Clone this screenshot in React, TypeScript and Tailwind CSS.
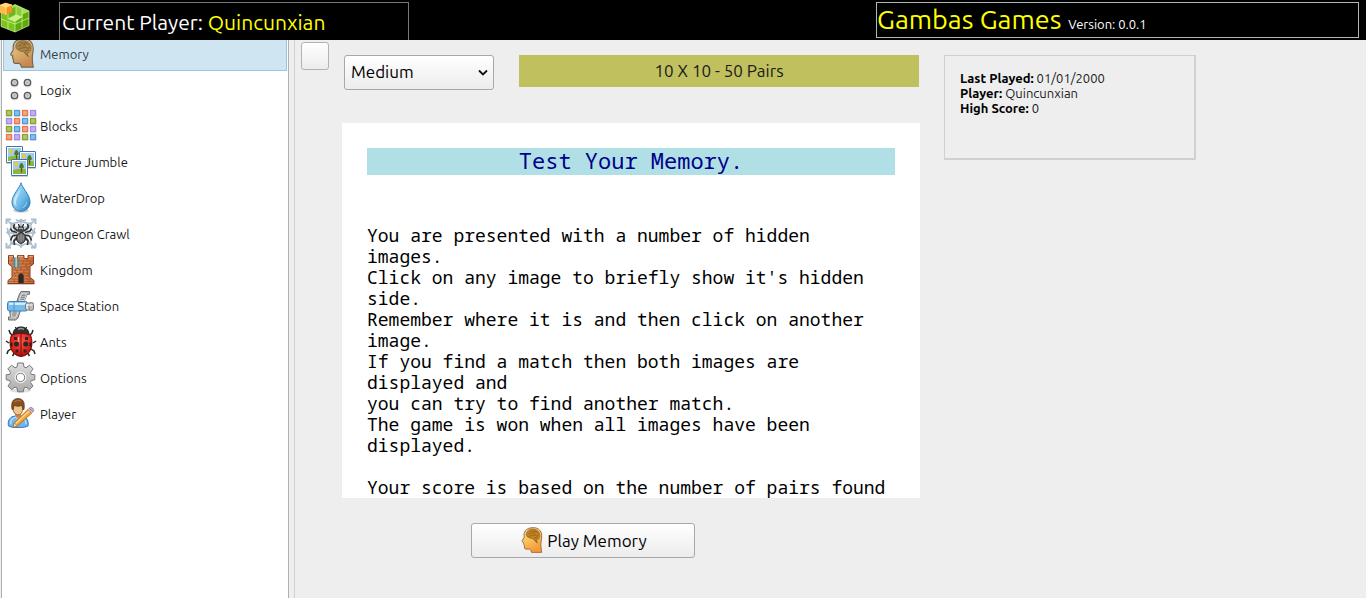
import { Fragment, useState } from "react";

const HeadIcon = ({ className, bright }: { className?: string; bright?: boolean }) => {
  const id = bright ? "head-bright" : "head-dim";
  return (
    <svg viewBox="-2 -1 34 34" className={className} aria-hidden="true">
      <defs>
        <linearGradient id={id} x1="0" y1="0" x2="0.4" y2="1">
          <stop offset="0" stopColor={bright ? "#f6d99b" : "#d9cba4"} />
          <stop offset="0.55" stopColor={bright ? "#f9c45c" : "#d8b070"} />
          <stop offset="1" stopColor={bright ? "#f79a35" : "#c68a52"} />
        </linearGradient>
      </defs>
      <path
        d="M8 5C10 2 14 1 18 1c6 0 10 4 10 10 0 4-1 7-1 10 0 3 .2 6 1 10H15.500c-.3-2-.8-3.500-2.500-4H9c-1.500 0-2.300-1-2-2.500l.2-1.200-.9-.8.3-1-.7-1.200.3-1.300-1.700-.8c-.7-.4-.6-1 0-1.800l2.200-3.400C6.500 9 6.500 7 8 5z"
        fill={`url(#${id})`}
        stroke={bright ? "#9b6b46" : "#77654f"}
        strokeWidth="1.200"
      />
      <path
        d="M9.500 10C9 6 12 3 16 2.800c5-.3 9.500 2.500 9.700 7.200 0 4-1.700 6-4.200 6l1 3.500-5-5.500c-2 .6-4 .3-5-1.300-1.700 0-2.800-1-3-2.700z"
        fill={bright ? "#c48325" : "#a98348"}
        stroke="#8b6428"
        strokeWidth="0.800"
      />
      <path
        d="M12 9c1-2 3-1.500 4 0M14 5.500c2-1 3 1 5 0s3 1 4 2M17 10c1 1 3-1 4 .5s3 0 3-1M12 12c2-.5 3-2 5-1M19 13c1 .8 3 .5 4-.5M17 7.500h3"
        fill="none"
        stroke={bright ? "#8d5a15" : "#77592b"}
        strokeWidth="0.900"
      />
      <path d="M17.500 14.500l5.500 5.500" stroke="#7a5b36" strokeWidth="1" />
    </svg>
  );
};

const LogixIcon = ({ className }: { className?: string }) => (
  <svg viewBox="0 0 32 32" className={className} aria-hidden="true">
    {[[9.5, 9.5], [22.5, 9.5], [9.5, 22.5], [22.5, 22.5]].map(([cx, cy]) => (
      <g key={`${cx}-${cy}`}>
        <ellipse cx={cx} cy={cy + 1.5} rx="4" ry="3.500" fill="#00000022" />
        <circle cx={cx} cy={cy} r="3.200" fill="#b9b9b9" stroke="#5b5b5b" strokeWidth="1.300" />
        <circle cx={cx} cy={cy} r="1.800" fill="none" stroke="#dedede" strokeWidth="0.700" />
      </g>
    ))}
  </svg>
);

const blockRows = [
  ["#8aa51f", "#4a9de0", "#f0764a", "#a58af0"],
  ["#a58af0", "#f0764a", "#4a9de0", "#8aa51f"],
  ["#8aa51f", "#4a9de0", "#f0764a", "#a58af0"],
  ["#f0764a", "#a58af0", "#8aa51f", "#4a9de0"],
];

const BlocksIcon = ({ className }: { className?: string }) => (
  <svg viewBox="0 0 32 32" className={className} aria-hidden="true">
    {blockRows.map((row, y) =>
      row.map((color, x) => (
        <g key={`${x}-${y}`}>
          <rect x={x * 8 + 1} y={y * 8 + 2} width="6.500" height="6" rx="0.800" fill="#00000020" />
          <rect x={x * 8 + 1.5} y={y * 8 + 1.5} width="5" height="5" fill={color} fillOpacity="0.500" stroke={color} strokeWidth="1.300" />
        </g>
      )),
    )}
  </svg>
);

const PicturesIcon = ({ className }: { className?: string }) => (
  <svg viewBox="0 0 32 32" className={className} aria-hidden="true">
    {[[1, 1], [14, 6], [6, 14]].map(([x, y]) => (
      <g key={x} transform={`translate(${x} ${y})`}>
        <rect x="0" y="1" width="17" height="17" rx="1" fill="#00000030" />
        <rect x="0.500" y="0.500" width="16" height="16" rx="0.500" fill="#fff" stroke="#3d75ac" />
        <rect x="2" y="2" width="13" height="13" fill="#9ccdf0" />
        <path d="M2 11q7-2 13-.5V15H2z" fill="#8fb53a" />
        <circle cx="5" cy="5.200" r="2" fill="#fbc52f" />
        <path d="M10.500 13.500V8" stroke="#6b4a1c" strokeWidth="1.200" />
        <path d="M10.500 4c1.200 0 1.800 2 2.300 3.600.2 1.300-.9 1.900-2.300 1.900s-2.500-.6-2.300-1.900C8.700 6 9.300 4 10.500 4z" fill="#4e7a22" />
      </g>
    ))}
  </svg>
);

const DropIcon = ({ className }: { className?: string }) => (
  <svg viewBox="0 0 32 32" className={className} aria-hidden="true">
    <defs>
      <linearGradient id="drop" x1="0" y1="0" x2="1" y2="1">
        <stop offset="0.200" stopColor="#a8daf5" />
        <stop offset="0.600" stopColor="#6bb8e8" />
        <stop offset="1" stopColor="#2379bd" />
      </linearGradient>
    </defs>
    <ellipse cx="16" cy="29.500" rx="8" ry="2.200" fill="#00000030" />
    <path d="M16 1.800c1 5 9 12 9 19.200 0 5.500-4 9.300-9 9.300s-9-3.800-9-9.300C7 13.800 15 6.800 16 1.800z" fill="url(#drop)" stroke="#2c80bd" />
    <path d="M15 7c-1 5-6 8-6.200 13.500.2 3 1.700 4.500 2.700 4.500C9.500 18 15 14 15 7z" fill="#e3f5ff" fillOpacity="0.700" />
    <path d="M22 20c0 4-2 6.500-5 7 3-2 4-4 5-7z" fill="#b9e8ff" />
  </svg>
);

const SpiderIcon = ({ className }: { className?: string }) => (
  <svg viewBox="0 0 32 32" className={className} aria-hidden="true">
    <g fill="none" stroke="#a9bccc" strokeWidth="1.500">
      <path d="M2 3l28 28M30 3L2 31M16 2v29M2 16h28" />
      <path d="M6 6q5 1 10-2 5 3 10 2-1 5 3 10-4 5-3 11-5-1-10 2-5-3-10-2 1-6-3-11 4-5 3-10z" />
      <path d="M10 10q3 1 6-1 3 2 6 1-1 3 2 6-3 3-2 7-3-1-6 1-3-2-6-1 1-4-2-7 3-3 2-6z" />
      <path d="M1.500 7V2.500H6M26 2.500h4.500V7M30.500 26v4.500H26M6 30.500H1.500V26" strokeWidth="1.900" />
      <path d="M1.500 11q3 2 0 5M30.500 11q-3 2 0 5M11 2.500q2 2.500 5 0 3 2.500 5 0" />
    </g>
    <g fill="none" stroke="#343434" strokeWidth="1.700" strokeLinejoin="round">
      <path d="M13 14L8.500 10.500 9.500 7M19 14l4.500-3.500-1-3.500M12 15.500L7 14l-1.500-2.500M20 15.500l5-1.500 1.500-2.500M12 18l-4.500 1-2 4.500M20 18l4.500 1 2 4.500M12.500 20.500L9 23.500l.5 4.500M19.500 20.500l3.500 3-.5 4.500" />
    </g>
    <ellipse cx="16" cy="12.500" rx="3.300" ry="3.300" fill="#454545" />
    <path d="M14.500 10l-1-3M17.500 10l1-3" stroke="#222" strokeWidth="1.300" />
    <ellipse cx="16" cy="21" rx="4.500" ry="5.400" fill="#666" stroke="#222" />
    <path d="M16 17v8.500M13.800 18.500v5M18.200 18.500v5" stroke="#a5a5a5" strokeWidth="0.900" />
    <path d="M14 12q2-2 4 0" fill="none" stroke="#ccc" />
  </svg>
);

const CastleIcon = ({ className }: { className?: string }) => (
  <svg viewBox="0 0 32 32" className={className} aria-hidden="true">
    <defs>
      <linearGradient id="castle" x1="0" y1="0" x2="1" y2="0">
        <stop offset="0" stopColor="#e09058" />
        <stop offset="1" stopColor="#c96a36" />
      </linearGradient>
    </defs>
    <rect x="2" y="29.500" width="28" height="2.500" rx="1" fill="#00000030" />
    <path d="M3.500 2.500h5v3h4v-3h6.500v3h4v-3h5.500V11L25 13.500v11l4 3V30.500H3v-3l4-3v-11L3.500 11z" fill="url(#castle)" stroke="#863d1d" />
    <path
      d="M4 8h24M4 11h24M7.500 14h17M7.500 17h17M7.500 20h17M7.500 23h17M6 26h20M4 28.500h24M7 5v3M14 5v3M22 6v2M10 8v3M18 8v3M25 8v3M12 11v3M21 11v3M10 14v3M16 14v3M22 14v3M12 17v3M19 17v3M10 20v3M23 20v3M9 26v3M24 26v3"
      stroke="#8f4422"
      strokeWidth="0.600"
    />
    <path d="M4 3.300h4M13 3.300h5M24 3.300h4" stroke="#efb086" />
    <path d="M13.500 30v-7a2.500 2.500 0 0 1 5 0v7z" fill="#292929" stroke="#6b3116" strokeWidth="0.800" />
    <path d="M8.500 4.500h5.500V16l-2.700-2.300L8.500 16z" fill="#3c8bd0" />
    <path d="M10.400 4.500h1.700V14h-1.700z" fill="#f2c635" />
  </svg>
);

const StationIcon = ({ className }: { className?: string }) => (
  <svg viewBox="0 0 32 32" className={className} aria-hidden="true">
    <path d="M16 2.500h8.500v2.800h-2.500L19.500 12H12l2.500-7zM4.500 21h11l-2.500 8-2.500 2H3.500v-3h2z" fill="#b6b6b6" stroke="#6e6e6e" />
    <path d="M16.500 5h5L19.300 11.500h-5zM7.500 22h5.500L11 28H6z" fill="#8b8b8b" stroke="#eee" strokeWidth="0.800" />
    <path d="M16.500 7.500h4M15.500 9.500h4M8 24h4M7 26h4" stroke="#d0d0d0" strokeWidth="0.700" />
    <rect x="2.500" y="12.500" width="20" height="9.500" rx="2" fill="#79bbec" stroke="#3d83bc" />
    <path d="M4 14.800h17" stroke="#d5eeff" strokeWidth="2.200" />
    <path d="M9 13v9" stroke="#4f96ce" />
    <rect x="20.500" y="14" width="5.500" height="7" rx="2" fill="#e0e0e0" stroke="#787878" />
    <rect x="24" y="13.500" width="4.500" height="8" rx="2" fill="#bababa" stroke="#787878" />
    <path d="M21.500 16h6" stroke="#fff" />
  </svg>
);

const LadybugIcon = ({ className }: { className?: string }) => (
  <svg viewBox="0 0 32 32" className={className} aria-hidden="true">
    <defs>
      <radialGradient id="bug" cx="0.500" cy="0.350" r="0.650">
        <stop offset="0" stopColor="#ff5a4d" />
        <stop offset="0.700" stopColor="#df2019" />
        <stop offset="1" stopColor="#990c08" />
      </radialGradient>
    </defs>
    <path d="M7 10L5 8 4 5M25 10l2-2 1-3M4 18l-3-2M28 18l3-2M6 24l-3 2-1 3M26 24l3 2 1 3M10 27l-2.500 4M22 27l2.500 4" fill="none" stroke="#252525" strokeWidth="1.500" />
    <path d="M12 4l-2-2M20 4l2-2" stroke="#252525" />
    <path d="M8 10c0-5 3-8 8-8s8 3 8 8l-8 3z" fill="#303030" stroke="#151515" />
    <path d="M13 4.500q3-2 6 0" stroke="#999" fill="none" strokeWidth="1.300" />
    <path d="M6.500 10q9.500-3.500 19 0c3.500 9 1 20.500-9.500 21.500C5.500 30.500 3 19 6.500 10z" fill="url(#bug)" stroke="#6b0f0b" />
    <path d="M16 9v22" stroke="#930f0a" strokeWidth="1.200" />
    <circle cx="11.500" cy="19" r="2.600" fill="#292929" />
    <circle cx="20.800" cy="19" r="2.600" fill="#292929" />
    <path d="M9 12h3v3H9zM20 12h3v3h-3zM10.500 24.500h3v3h-3zM18.500 24.500h3v3h-3z" fill="#292929" />
    <path d="M5.500 17.500h2v4h-2zM24.500 17.500h2v4h-2z" fill="#3c1513" />
    <path d="M13.500 12v5" stroke="#ffa59e" strokeWidth="1" />
  </svg>
);

const GearIcon = ({ className }: { className?: string }) => (
  <svg viewBox="0 0 32 32" className={className} aria-hidden="true">
    <defs>
      <linearGradient id="gear" x1="0" y1="0" x2="0" y2="1">
        <stop offset="0" stopColor="#dedede" />
        <stop offset="1" stopColor="#aaa" />
      </linearGradient>
    </defs>
    <ellipse cx="15.500" cy="29.500" rx="11" ry="2" fill="#00000020" />
    <path
      fillRule="evenodd"
      d="M12.700 2h5.600l.7 4 2 .8L24.500 4.200l3.600 3.600-2.600 3.500.8 2 3.500.5v5l-3.500.7-.8 2 2.600 3.500-3.600 3.600-3.500-2.400-2 .8-.7 3.800h-5.600l-.7-3.800-2-.8-3.500 2.400-3.600-3.600L5.500 21.500l-.8-2-3.500-.7v-5l3.500-.5.8-2-2.600-3.500 3.600-3.600L10 6.800l2-.8zM15.500 12.200a4.200 4.200 0 1 0 0 8.400 4.200 4.200 0 0 0 0-8.400z"
      fill="url(#gear)"
      stroke="#777"
    />
    <circle cx="15.500" cy="16.400" r="5.300" fill="none" stroke="#f0f0f0" strokeWidth="1.100" />
  </svg>
);

const PlayerIcon = ({ className }: { className?: string }) => (
  <svg viewBox="0 0 32 32" className={className} aria-hidden="true">
    <path d="M3.500 29c-1-5 1-8.500 4.500-9.500l5-1 5 1c4 1 6 5 5 9.500-3 2-16.500 2-19.500 0z" fill="#6fb6f2" stroke="#2d77ba" />
    <path d="M5.500 27c0-4 2-6 5-7l2.500 2 3-2c3 .7 5 3 5 7" fill="none" stroke="#c2e4ff" strokeWidth="1.200" />
    <path d="M10 16h6v3l-3 3-3-3z" fill="#c98d54" />
    <path d="M8 10c0-5 2-7 5-7s5 2 5 7-2 8-5 8-5-3-5-8z" fill="#edc58b" stroke="#956437" />
    <path d="M7 12.500C5.800 5 8 1.500 13 1.500s7.200 3.500 6 11h-1.200c-.4-2-.6-3-1-4-2.800 1-5 1-7.600 0-.4 1-.6 2-1 4z" fill="#865020" stroke="#603611" strokeWidth="0.700" />
    <path d="M9.500 5q3-2.500 6.500-.8" fill="none" stroke="#b67a3c" strokeWidth="1.200" />
    <path d="M8 30.300l1.300-4.500L23 12.500l3.800 3.500L12.500 29z" fill="#f5a132" stroke="#a8651c" strokeWidth="0.800" />
    <path d="M10.500 26.800L24.500 13.800" stroke="#ffdc8b" strokeWidth="1.200" />
    <path d="M8 30.300l1.300-4.500L12.500 29z" fill="#f2dcb1" stroke="#846034" strokeWidth="0.600" />
    <path d="M23 12.500l1.200-1.200 3.800 3.500-1.200 1.200z" fill="#ccc" stroke="#888" strokeWidth="0.500" />
    <path d="M24.200 11.300l.8-.7c1.500-1 4 1.200 3.600 2.800l-.6 1.400z" fill="#dca0ca" stroke="#9b6c90" strokeWidth="0.700" />
  </svg>
);

const CubeLogo = ({ className }: { className?: string }) => (
  <svg viewBox="0 0 32 32" className={className} aria-hidden="true">
    <path d="M1 9.500l14 5.500v15L1 24.500z" fill="#79c51c" />
    <path d="M15 15l14-6v14.500L15 30z" fill="#5eab0c" />
    <path d="M1 9.500L15 2.500l14 6.500-14 6z" fill="#a6de4a" />
    <path d="M8 8l8-3.500V13l-8 4z" fill="#6fb61f" />
    <path d="M16 4.500l6 3V15l-6-2z" fill="#8ccb3c" />
    <path d="M8 17l8-4 6 2-7 5z" fill="#c9f285" />
    <path d="M1 17l7 2.500v7.500M8 19.500l7 2.500 14-6M22 13v13.500M15 20v10M22 7.500V15l-6-2V4.500M16 13l-8 4V8M1 9.500L15 2.500l14 6.500v14.500L15 30 1 24.500zM22 12l7-3" fill="none" stroke="#d9f7a5" strokeWidth="0.700" />
    <path d="M0 3l5.500-2.300L12 2.800v7L6 13l-6-2.200z" fill="#f4941f" />
    <path d="M0 3l5.500-2.300L12 2.800 6 5.300z" fill="#ffdc78" />
    <path d="M0 3l6 2.300V13L0 10.800z" fill="#ffb947" />
    <path d="M0 3l6 2.300L12 2.800M6 5.300V13" fill="none" stroke="#ffe4a2" strokeWidth="0.800" />
  </svg>
);

const games = [
  { name: "Memory", icon: HeadIcon },
  { name: "Logix", icon: LogixIcon },
  { name: "Blocks", icon: BlocksIcon },
  { name: "Picture Jumble", icon: PicturesIcon },
  { name: "WaterDrop", icon: DropIcon },
  { name: "Dungeon Crawl", icon: SpiderIcon },
  { name: "Kingdom", icon: CastleIcon },
  { name: "Space Station", icon: StationIcon },
  { name: "Ants", icon: LadybugIcon },
  { name: "Options", icon: GearIcon },
  { name: "Player", icon: PlayerIcon },
];

const instructions = [
  "You are presented with a number of hidden images.",
  "Click on any image to briefly show it's hidden side.",
  "Remember where it is and then click on another image.",
  "If you find a match then both images are displayed and",
  "you can try to find another match.",
  "The game is won when all images have been displayed.",
];

export default function App() {
  const [selected, setSelected] = useState("Memory");
  const [level, setLevel] = useState("Medium");

  return (
    <div className="flex h-screen flex-col overflow-hidden bg-[#eeeeee] font-['Ubuntu','Noto_Sans',sans-serif] text-[13px] text-[#1a1a1a]">
      <header className="flex h-10 shrink-0 justify-between bg-black pt-0.5 pr-[7px]">
        <div className="flex">
          <CubeLogo className="mr-[27px] h-8 w-8" />
          <div className="w-[350px] border border-b-0 border-[#777777] pl-0.5 text-[21px] leading-[38px] whitespace-nowrap text-white">
            Current Player: <span className="text-[#ffff00]">Quincunxian</span>
          </div>
        </div>
        <div className="h-9 w-[483px] border border-[#b5b5b5] leading-8 whitespace-nowrap text-white">
          <span className="text-[27px] text-[#ffff00]">Gambas Games</span> <span className="ml-1">Version: 0.0.1</span>
        </div>
      </header>

      <div className="flex min-h-0 flex-1">
        <nav className="ml-px w-72 shrink-0 overflow-hidden border-x border-[#b0b0b0] bg-white">
          <ul className="-mt-1 px-px">
            {games.map((game) => (
              <li key={game.name} className="h-9">
                <button
                  type="button"
                  onClick={() => setSelected(game.name)}
                  className={`flex h-[35px] w-full items-start gap-[3px] border pl-px text-left leading-[34px] ${
                    selected === game.name ? "border-[#9ac5e3] bg-[#cfe5f2] text-[#31404b]" : "border-transparent"
                  }`}
                >
                  <game.icon className="h-8 w-8 shrink-0" />
                  {game.name}
                </button>
              </li>
            ))}
          </ul>
        </nav>

        <main className="ml-[5px] flex min-w-0 flex-1 items-start border-l border-[#d0d0d0] pl-1.5">
          <button type="button" aria-label="Toggle" className="mt-0.5 h-7 w-7 shrink-0 rounded-[3px] border border-[#b2b2b2] bg-linear-to-b from-white to-[#ececec]" />

          <section className="ml-[13px] flex max-w-[578px] flex-1 flex-col pt-[15px]">
            <div className="flex items-start gap-[25px] px-0.5 pr-px text-[17px]">
              <div className="relative w-[150px] shrink-0">
                <select
                  aria-label="Level"
                  value={level}
                  onChange={(e) => setLevel(e.target.value)}
                  className="h-[35px] w-full appearance-none rounded-[3px] border border-[#a8a8a8] bg-linear-to-b from-white to-[#ececec] pb-0.5 pl-1.5 text-black"
                >
                  <option>Easy</option>
                  <option>Medium</option>
                  <option>Hard</option>
                </select>
                <svg viewBox="0 0 10 8" className="pointer-events-none absolute top-3.5 right-1.5 h-2 w-2.5" aria-hidden="true">
                  <path d="M1 1.500l4 4 4-4" fill="none" stroke="#111" strokeWidth="1.800" />
                </svg>
              </div>
              <div className="h-8 flex-1 bg-[#c0c05e] text-center leading-8">10 X 10 - 50 Pairs</div>
            </div>

            <article className="mt-[33px] h-[375px] overflow-hidden bg-white p-[25px] font-['Noto_Sans_Mono','DejaVu_Sans_Mono',monospace] text-[18px] leading-[21px] text-black">
              <h1 className="mb-[50px] bg-[#b0e0e6] pb-0.5 text-center text-[22px] leading-[25px] text-[#00008b]">Test Your Memory.</h1>
              <p>
                {instructions.map((line) => (
                  <Fragment key={line}>
                    {line}
                    <br />
                  </Fragment>
                ))}
                <br />
                Your score is based on the number of pairs found
              </p>
            </article>

            <button
              type="button"
              className="mt-[25px] mr-24 flex h-[35px] w-56 items-center justify-center gap-0.5 self-center rounded-[3px] border border-[#a8a8a8] bg-linear-to-b from-white to-[#ececec] pr-0.5 text-[17px] text-black"
            >
              <HeadIcon bright className="mb-0.5 h-7 w-7" />
              Play {selected}
            </button>
          </section>

          <aside className="mt-[15px] ml-6 h-[105px] w-[252px] shrink-0 border border-r-2 border-b-2 border-[#d0d0d0] px-[15px] pt-[15px] leading-[15px]">
            <p>
              <b className="text-black">Last Played:</b> 01/01/2000
            </p>
            <p>
              <b className="text-black">Player:</b> Quincunxian
            </p>
            <p>
              <b className="text-black">High Score:</b> 0
            </p>
          </aside>
        </main>
      </div>
    </div>
  );
}
